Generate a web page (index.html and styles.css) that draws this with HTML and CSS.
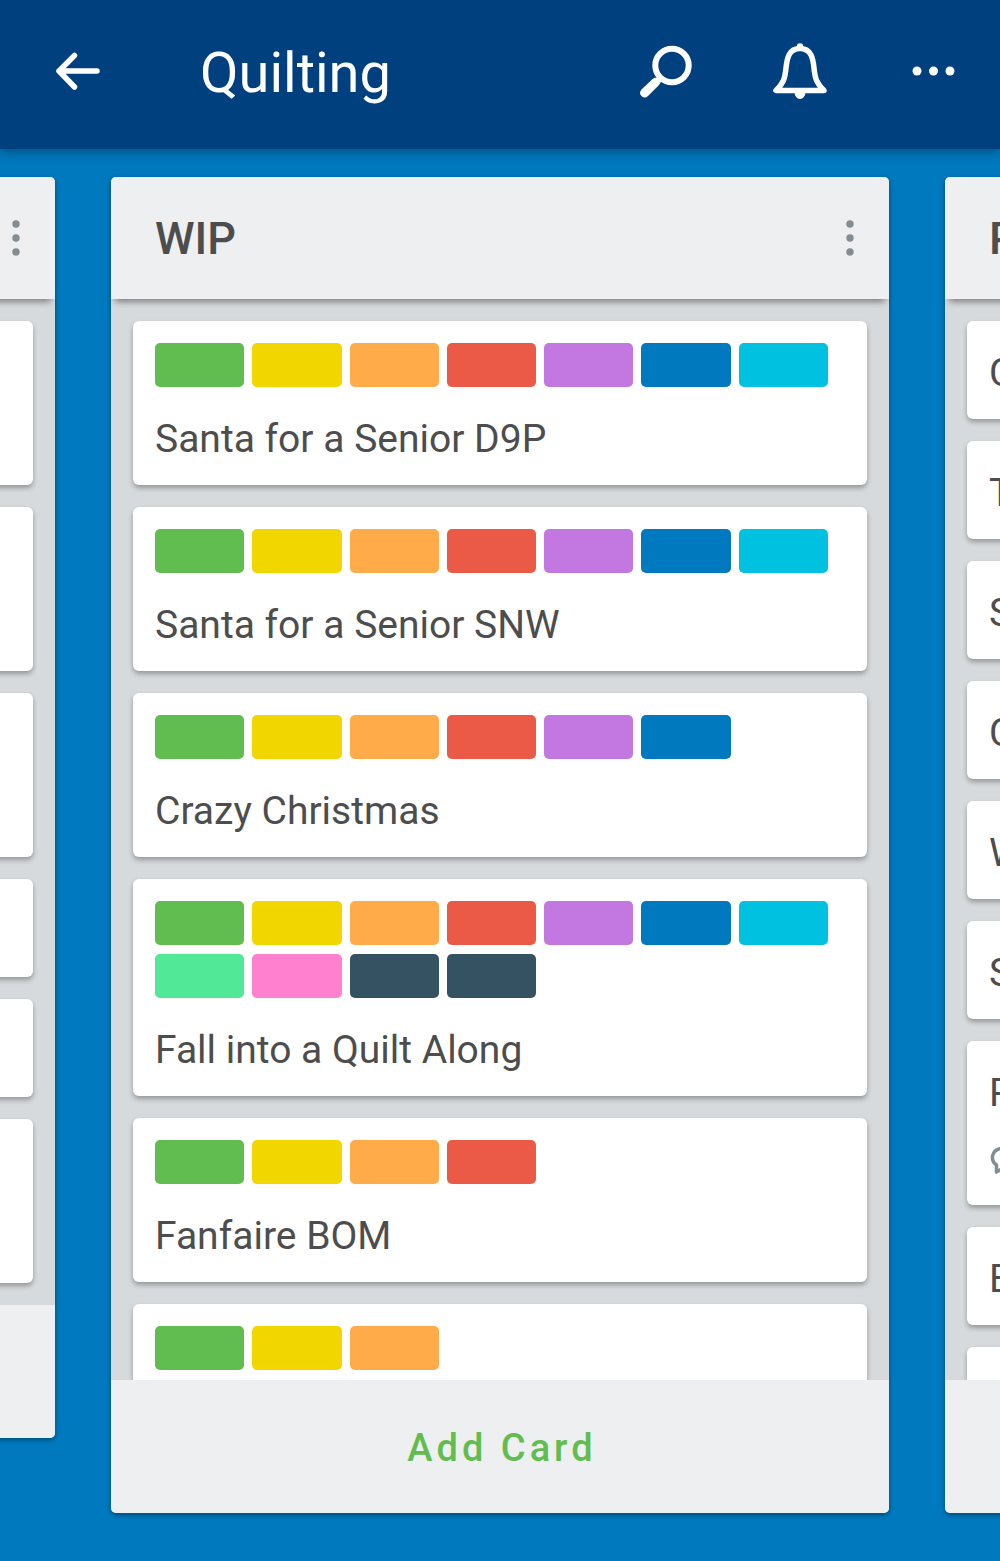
FILE: index.html
```
<!DOCTYPE html>
<html lang="en">
<head>
  <meta charset="UTF-8">
  <meta name="viewport" content="width=device-width, initial-scale=1.0">
  <title>Quilting</title>
  <link rel="stylesheet" href="styles.css">
</head>
<body>
  <header class="topbar">
    <button class="icon-btn back" aria-label="Back">
      <svg width="60" height="60" viewBox="0 0 60 60" fill="none" stroke="#fff" stroke-width="5.5" stroke-linecap="round" stroke-linejoin="round">
        <path d="M49 30H11M26.5 14.5L11 30L26.5 46"/>
      </svg>
    </button>
    <h1 class="board-title">Quilting</h1>
    <nav class="actions">
      <button class="icon-btn" aria-label="Search">
        <svg width="60" height="60" viewBox="0 0 60 60" fill="none" stroke="#fff">
          <circle cx="36" cy="24.500" r="16.700" stroke-width="6"/>
          <path d="M23 35.500L26 38.500C24.500 40 25 42 22.500 44.500L12 55Q8.500 58 5.500 55Q2.500 52 5.500 48.500L16 38.500C18.500 36 21 37 23 35.500Z" fill="#fff" stroke="none"/>
        </svg>
      </button>
      <button class="icon-btn" aria-label="Notifications">
        <svg width="60" height="60" viewBox="0 0 60 60" fill="none" stroke="#fff" stroke-width="5.5" stroke-linejoin="round">
          <path d="M30 7.500C19 7.500 17 17 16 27C15 38 13 43 6 49.500H54C47 43 45 38 44 27C43 17 41 7.500 30 7.500Z"/>
          <circle cx="30" cy="5.500" r="3.200" fill="#fff" stroke="none"/>
          <path d="M24.500 51H35.500A5.500 7 0 0 1 24.500 51Z" fill="#fff" stroke="none"/>
        </svg>
      </button>
      <button class="icon-btn" aria-label="More">
        <svg width="60" height="60" viewBox="0 0 60 60" fill="#fff">
          <circle cx="13" cy="30" r="4.5"/>
          <circle cx="29.500" cy="30" r="4.5"/>
          <circle cx="46" cy="30" r="4.5"/>
        </svg>
      </button>
    </nav>
  </header>

  <main class="board">
    <section class="list">
      <div class="list-header">
        <button class="list-menu" aria-label="List menu">
          <svg width="12" height="36" viewBox="0 0 12 36" fill="#838c91"><circle cx="6" cy="4" r="3.7"/><circle cx="6" cy="18" r="3.7"/><circle cx="6" cy="32" r="3.7"/></svg>
        </button>
      </div>
      <div class="cards">
        <div class="card tall"></div>
        <div class="card tall"></div>
        <div class="card tall"></div>
        <div class="card"></div>
        <div class="card"></div>
        <div class="card tall"></div>
      </div>
      <div class="list-footer"></div>
    </section>

    <section class="list">
      <div class="list-header">
        <h2>WIP</h2>
        <button class="list-menu" aria-label="List menu">
          <svg width="12" height="36" viewBox="0 0 12 36" fill="#838c91"><circle cx="6" cy="4" r="3.7"/><circle cx="6" cy="18" r="3.7"/><circle cx="6" cy="32" r="3.7"/></svg>
        </button>
      </div>
      <div class="cards">
        <div class="card">
          <div class="labels">
            <span class="label green"></span>
            <span class="label yellow"></span>
            <span class="label orange"></span>
            <span class="label red"></span>
            <span class="label purple"></span>
            <span class="label blue"></span>
            <span class="label sky"></span>
          </div>
          <p class="card-title">Santa for a Senior D9P</p>
        </div>
        <div class="card">
          <div class="labels">
            <span class="label green"></span>
            <span class="label yellow"></span>
            <span class="label orange"></span>
            <span class="label red"></span>
            <span class="label purple"></span>
            <span class="label blue"></span>
            <span class="label sky"></span>
          </div>
          <p class="card-title">Santa for a Senior SNW</p>
        </div>
        <div class="card">
          <div class="labels">
            <span class="label green"></span>
            <span class="label yellow"></span>
            <span class="label orange"></span>
            <span class="label red"></span>
            <span class="label purple"></span>
            <span class="label blue"></span>
          </div>
          <p class="card-title">Crazy Christmas</p>
        </div>
        <div class="card">
          <div class="labels">
            <span class="label green"></span>
            <span class="label yellow"></span>
            <span class="label orange"></span>
            <span class="label red"></span>
            <span class="label purple"></span>
            <span class="label blue"></span>
            <span class="label sky"></span>
            <span class="label lime"></span>
            <span class="label pink"></span>
            <span class="label black"></span>
            <span class="label black"></span>
          </div>
          <p class="card-title">Fall into a Quilt Along</p>
        </div>
        <div class="card">
          <div class="labels">
            <span class="label green"></span>
            <span class="label yellow"></span>
            <span class="label orange"></span>
            <span class="label red"></span>
          </div>
          <p class="card-title">Fanfaire BOM</p>
        </div>
        <div class="card tall">
          <div class="labels">
            <span class="label green"></span>
            <span class="label yellow"></span>
            <span class="label orange"></span>
          </div>
        </div>
      </div>
      <div class="list-footer">
        <button class="add-card">Add Card</button>
      </div>
    </section>

    <section class="list">
      <div class="list-header">
        <h2>P</h2>
      </div>
      <div class="cards">
        <div class="card"><p class="card-title">C</p></div>
        <div class="card"><p class="card-title">T</p></div>
        <div class="card"><p class="card-title">S</p></div>
        <div class="card"><p class="card-title">C</p></div>
        <div class="card"><p class="card-title">W</p></div>
        <div class="card"><p class="card-title">S</p></div>
        <div class="card tall">
          <p class="card-title">P</p>
          <svg class="badge" width="32" height="32" viewBox="0 0 32 32" fill="none" stroke="#838c91" stroke-width="3.500" stroke-linejoin="round">
            <path d="M7.500 27V20C4.500 18 3 15 3.500 11C4.500 6 9 3 16 3C24 3 29 7 29 13C29 19 24 22 16 22Z"/>
          </svg>
        </div>
        <div class="card"><p class="card-title">E</p></div>
        <div class="card"></div>
      </div>
      <div class="list-footer"></div>
    </section>
  </main>
</body>
</html>
```
FILE: styles.css
```
* {
  box-sizing: border-box;
}

body {
  margin: 0;
  height: 100vh;
  display: flex;
  flex-direction: column;
  overflow: hidden;
  background: #0079bf;
  color: #4d4d4d;
  font-family: Roboto, sans-serif;
}

h1, h2, p {
  margin: 0;
}

button {
  padding: 0;
  border: 0;
  background: none;
  font-family: inherit;
  cursor: pointer;
}

svg {
  display: block;
}

/* top bar */
.topbar {
  flex: none;
  display: flex;
  align-items: center;
  height: 149px;
  padding: 0 36px 7px 48px;
  background: #00407f;
  box-shadow: 0 2px 12px rgba(0, 0, 0, 0.4);
}

.board-title {
  flex: 1;
  margin-left: 92px;
  padding-top: 4px;
  color: #fff;
  font-size: 56px;
  font-weight: 400;
  line-height: 64px;
}

.actions {
  display: flex;
  gap: 74px;
}

/* board */
.board {
  flex: 1;
  min-height: 0;
  display: flex;
  justify-content: center;
  align-items: flex-start;
  gap: 56px;
  padding: 28px 0 48px;
  overflow: hidden;
}

.list {
  flex: 0 0 auto;
  width: 77.8%;
  max-height: 100%;
  display: flex;
  flex-direction: column;
  border-radius: 5px;
  background: #d6dadc;
  box-shadow: 0 2px 5px rgba(0, 0, 0, 0.4);
}

.list-header {
  flex: none;
  display: flex;
  align-items: center;
  height: 122px;
  padding: 0 33px 0 44px;
  border-radius: 5px 5px 0 0;
  background: #edeff0;
  box-shadow: 0 7px 6px -4px rgba(0, 0, 0, 0.4);
  z-index: 1;
}

.list-header h2 {
  padding-top: 2px;
  font-size: 45px;
  font-weight: 500;
  line-height: 52px;
}

.list-menu {
  margin-left: auto;
}

.cards {
  flex: 1;
  min-height: 0;
  display: flex;
  flex-direction: column;
  gap: 22px;
  padding: 22px;
  overflow: hidden;
}

.card {
  flex: none;
  min-height: 98px;
  border-radius: 6px;
  background: #fff;
  box-shadow: 0 3px 5px rgba(0, 0, 0, 0.3);
}

.card.tall {
  min-height: 164px;
}

.labels {
  display: grid;
  grid-template-columns: repeat(7, 1fr);
  gap: 9px 8px;
  padding: 22px 39px 0 22px;
}

.label {
  height: 44px;
  border-radius: 5px;
}

.green { background: #61bd4f; }
.yellow { background: #f2d600; }
.orange { background: #ffab4a; }
.red { background: #eb5a46; }
.purple { background: #c377e0; }
.blue { background: #0079bf; }
.sky { background: #00c2e0; }
.lime { background: #51e898; }
.pink { background: #ff80ce; }
.black { background: #355263; }

.card-title {
  padding: 29px 22px 23px;
  font-size: 39px;
  line-height: 46px;
}

.badge {
  margin: 6px 22px 0;
}

.list-footer {
  flex: none;
  display: flex;
  justify-content: center;
  align-items: center;
  height: 133px;
  padding-top: 2px;
  border-radius: 0 0 5px 5px;
  background: #edeff0;
}

.add-card {
  color: #61bd4f;
  font-size: 38px;
  font-weight: 500;
  line-height: 46px;
  letter-spacing: 4px;
  text-indent: 4px;
}
```
